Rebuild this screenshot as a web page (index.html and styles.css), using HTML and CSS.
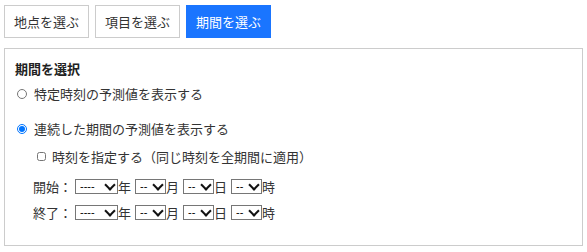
FILE: index.html
```html
<!DOCTYPE html>
<html lang="ja">
<head>
<meta charset="utf-8">
<title>期間を選ぶ</title>
<link rel="stylesheet" href="styles.css">
</head>
<body>
<div class="tabs">
  <button class="tab">地点を選ぶ</button>
  <button class="tab">項目を選ぶ</button>
  <button class="tab active">期間を選ぶ</button>
</div>
<div class="panel">
  <div class="title">期間を選択</div>
  <label class="opt opt-first"><input type="radio" name="mode" class="radio">特定時刻の予測値を表示する</label>
  <label class="opt opt-second"><input type="radio" name="mode" class="radio" checked>連続した期間の予測値を表示する</label>
  <label class="check-row"><input type="checkbox" class="check">時刻を指定する（同じ時刻を全期間に適用）</label>
  <div class="date-row date-start">
    <span class="lbl">開始：</span>
    <span class="sel-wrap sel-y"><select class="sel"><option>----</option></select></span><span class="unit">年</span>
    <span class="sel-wrap sel-s"><select class="sel"><option>--</option></select></span><span class="unit">月</span>
    <span class="sel-wrap sel-s"><select class="sel"><option>--</option></select></span><span class="unit">日</span>
    <span class="sel-wrap sel-s"><select class="sel"><option>--</option></select></span><span class="unit">時</span>
  </div>
  <div class="date-row date-end">
    <span class="lbl">終了：</span>
    <span class="sel-wrap sel-y"><select class="sel"><option>----</option></select></span><span class="unit">年</span>
    <span class="sel-wrap sel-s"><select class="sel"><option>--</option></select></span><span class="unit">月</span>
    <span class="sel-wrap sel-s"><select class="sel"><option>--</option></select></span><span class="unit">日</span>
    <span class="sel-wrap sel-s"><select class="sel"><option>--</option></select></span><span class="unit">時</span>
  </div>
</div>
</body>
</html>
```
FILE: styles.css
```css
* { box-sizing: border-box; }
html, body { background: #fff; }
body {
  margin: 0;
  padding: 5px 4px;
  font-family: "Noto Sans CJK JP", "Noto Sans", sans-serif;
  font-size: 13px;
  line-height: 19px;
  color: #333;
}
.tabs {
  display: flex;
  gap: 6px;
}
.tab {
  font-family: inherit;
  font-size: 13px;
  line-height: 19px;
  padding: 6px 9px;
  border: 1px solid #ccc;
  background: #fff;
  color: #333;
  border-radius: 0;
  margin: 0;
}
.tab.active {
  background: #1a75ff;
  border-color: #1a75ff;
  color: #fff;
}
.panel {
  margin-top: 10px;
  border: 1px solid #ccc;
  height: 198px;
  padding: 10px;
  display: flex;
  flex-direction: column;
  align-items: flex-start;
}
.title {
  font-weight: bold;
  color: #222;
}
.opt {
  display: flex;
  align-items: center;
  padding-left: 2px;
}
.opt-first { margin-top: 6px; }
.opt-second { margin-top: 16px; }
.radio {
  width: 10px;
  height: 10px;
  margin: 0 7px 0 0;
}
.check-row {
  display: flex;
  align-items: center;
  margin-top: 9px;
  padding-left: 22px;
}
.check {
  width: 9px;
  height: 9px;
  margin: 0 6px 0 0;
}
.date-row {
  display: flex;
  align-items: center;
  padding-left: 18px;
  height: 19px;
}
.date-start { margin-top: 11px; }
.date-end { margin-top: 7px; }
.lbl { margin-right: 3px; }
.sel-wrap {
  position: relative;
  display: block;
  height: 15px;
}
.sel-wrap::after {
  content: "";
  position: absolute;
  top: 2px;
  right: 4px;
  width: 6px;
  height: 6px;
  border-right: 2px solid #111;
  border-bottom: 2px solid #111;
  transform: rotate(45deg);
  pointer-events: none;
}
.sel-y { width: 43px; }
.sel-s { width: 31px; }
.sel {
  -webkit-appearance: none;
  appearance: none;
  display: block;
  width: 100%;
  height: 15px;
  font-family: "Liberation Sans", sans-serif;
  font-size: 11px;
  line-height: 13px;
  padding: 0 0 0 4px;
  margin: 0;
  border: 1px solid #767676;
  border-radius: 0;
  background: #fff;
  color: #000;
}
.unit + .sel-wrap { margin-left: 4px; }
```
